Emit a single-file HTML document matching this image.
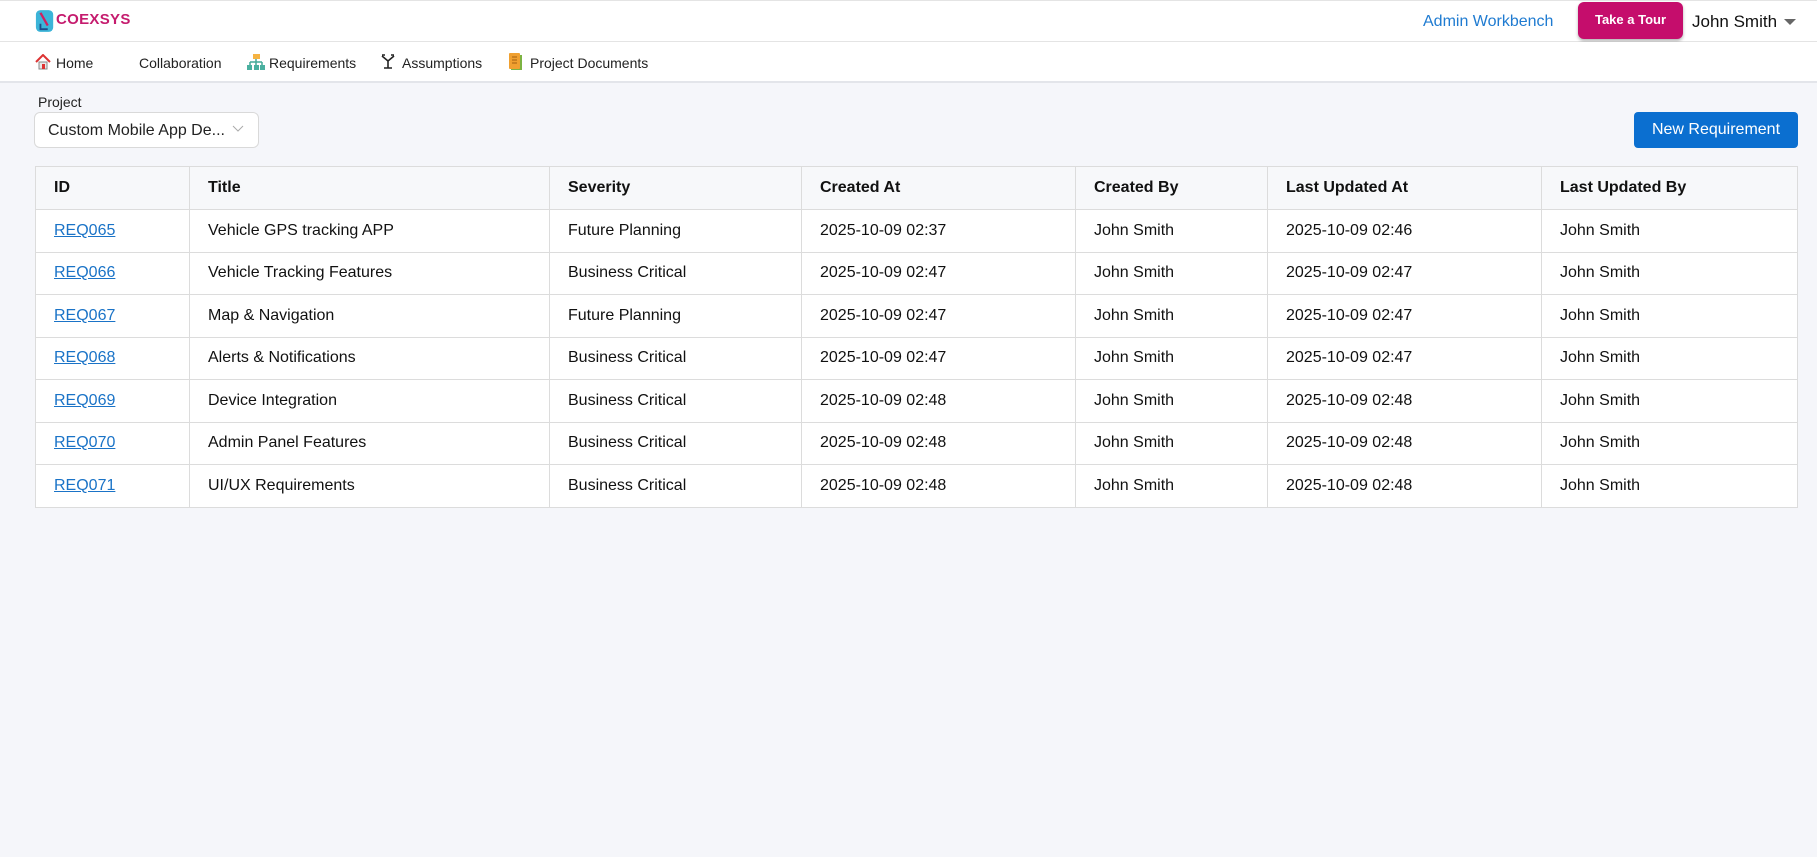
<!DOCTYPE html>
<html><head><meta charset="utf-8"><style>
*{box-sizing:border-box;margin:0;padding:0}
body{width:1817px;height:857px;background:#f5f6fa;font-family:"Liberation Sans",Arial,sans-serif;color:#111;position:relative;overflow:hidden}
.hdr{position:absolute;left:0;top:0;width:1817px;height:42px;background:#fff;border-top:1px solid #e4e4e4;border-bottom:1px solid #e4e4e4}
.nav{position:absolute;left:0;top:42px;width:1817px;height:41px;background:#fff;border-bottom:2px solid #e3e5ea}
.abs{position:absolute;white-space:nowrap}
.navt{font-size:14px;color:#222;top:13px}
table{position:absolute;left:35px;top:166px;width:1763px;border-collapse:collapse;background:#fff;font-size:16px}
td,th{border:1px solid #dcdcdc;height:42.5px;padding:0 0 0 18px;text-align:left;white-space:nowrap}
th{background:#f7f8fa;font-weight:bold;height:43px}
a{color:#1a73c7;text-decoration:underline}
</style></head><body>
<div class="hdr">
 <svg class="abs" style="left:35px;top:8px" width="20" height="24" viewBox="0 0 22 26"><rect x="1" y="1" width="19" height="24" rx="5" fill="#3bb4d8"/><path d="M6 4 L14 18" stroke="#d0205e" stroke-width="2.5"/><path d="M6 16 v6 h8" stroke="#1a4f8a" stroke-width="2" fill="none"/></svg>
 <div class="abs" style="left:56px;top:10px;font-size:15px;font-weight:bold;color:#c51b6e;letter-spacing:0.3px">COEXSYS</div>
 <div class="abs" style="left:1423px;top:12px;font-size:16px;color:#1f7bd1">Admin Workbench</div>
 <div class="abs" style="left:1578px;top:1px;width:105px;height:37px;background:#c50d6c;border-radius:6px;box-shadow:0 2px 3px rgba(0,0,0,.3);color:#fff;font-weight:bold;font-size:13px;text-align:center;line-height:36px">Take a Tour</div>
 <div class="abs" style="left:1692px;top:11px;font-size:17px;color:#111">John Smith</div>
 <div class="abs" style="left:1784px;top:18px;width:0;height:0;border-left:6px solid transparent;border-right:6px solid transparent;border-top:6px solid #666"></div>
</div>
<div class="nav">
 <svg class="abs" style="left:35px;top:12px" width="16" height="16" viewBox="0 0 16 16"><path d="M1 8 L8 1 L15 8" stroke="#d33" stroke-width="2" fill="none"/><rect x="4" y="8" width="8" height="7" fill="#e8e8e8" stroke="#888"/><rect x="7" y="10" width="3" height="5" fill="#d33"/></svg>
 <div class="abs navt" style="left:56px">Home</div>
 <div class="abs navt" style="left:139px">Collaboration</div>
 <svg class="abs" style="left:247px;top:12px" width="18" height="16" viewBox="0 0 18 16"><rect x="6" y="0" width="7" height="5" fill="#f5b342"/><path d="M9 5v3M3 8h12M3 8v3M9 8v3M15 8v3" stroke="#4a9" stroke-width="1.5"/><rect x="0" y="11" width="5" height="5" fill="#4ab0a0"/><rect x="7" y="11" width="5" height="5" fill="#4ab0a0"/><rect x="13" y="11" width="5" height="5" fill="#4ab0a0"/></svg>
 <div class="abs navt" style="left:269px">Requirements</div>
 <svg class="abs" style="left:380px;top:12px" width="16" height="16" viewBox="0 0 16 16"><path d="M2 2 L8 7 L14 2 M8 7 V14 M4 14 H12 M2 1h3M11 1h3" stroke="#222" stroke-width="1.6" fill="none"/></svg>
 <div class="abs navt" style="left:402px">Assumptions</div>
 <svg class="abs" style="left:508px;top:11px" width="15" height="18" viewBox="0 0 15 18"><rect x="3" y="2" width="11" height="15" fill="#7cb342"/><rect x="1" y="0" width="11" height="16" rx="1" fill="#f0a030"/><path d="M4 4h5M4 7h5M4 10h5" stroke="#a56010"/></svg>
 <div class="abs navt" style="left:530px">Project Documents</div>
</div>
<div class="abs" style="left:38px;top:94px;font-size:14px;color:#222">Project</div>
<div class="abs" style="left:34px;top:112px;width:225px;height:36px;background:#fff;border:1px solid #d9d9d9;border-radius:6px">
 <div class="abs" style="left:13px;top:9px;font-size:16px;color:#222">Custom Mobile App De...</div>
 <svg class="abs" style="left:197px;top:12px" width="12" height="8" viewBox="0 0 12 8"><path d="M1 1 L6 6 L11 1" stroke="#aaa" fill="none"/></svg>
</div>
<div class="abs" style="left:1634px;top:112px;width:164px;height:36px;background:#0b6fd0;border-radius:4px;color:#fff;font-size:16px;text-align:center;line-height:36px">New Requirement</div>
<table>
<colgroup><col style="width:154px"><col style="width:360px"><col style="width:252px"><col style="width:274px"><col style="width:192px"><col style="width:274px"><col></colgroup>
<tr><th>ID</th><th>Title</th><th>Severity</th><th>Created At</th><th>Created By</th><th>Last Updated At</th><th>Last Updated By</th></tr>
<tr><td><a>REQ065</a></td><td>Vehicle GPS tracking APP</td><td>Future Planning</td><td>2025-10-09 02:37</td><td>John Smith</td><td>2025-10-09 02:46</td><td>John Smith</td></tr>
<tr><td><a>REQ066</a></td><td>Vehicle Tracking Features</td><td>Business Critical</td><td>2025-10-09 02:47</td><td>John Smith</td><td>2025-10-09 02:47</td><td>John Smith</td></tr>
<tr><td><a>REQ067</a></td><td>Map &amp; Navigation</td><td>Future Planning</td><td>2025-10-09 02:47</td><td>John Smith</td><td>2025-10-09 02:47</td><td>John Smith</td></tr>
<tr><td><a>REQ068</a></td><td>Alerts &amp; Notifications</td><td>Business Critical</td><td>2025-10-09 02:47</td><td>John Smith</td><td>2025-10-09 02:47</td><td>John Smith</td></tr>
<tr><td><a>REQ069</a></td><td>Device Integration</td><td>Business Critical</td><td>2025-10-09 02:48</td><td>John Smith</td><td>2025-10-09 02:48</td><td>John Smith</td></tr>
<tr><td><a>REQ070</a></td><td>Admin Panel Features</td><td>Business Critical</td><td>2025-10-09 02:48</td><td>John Smith</td><td>2025-10-09 02:48</td><td>John Smith</td></tr>
<tr><td><a>REQ071</a></td><td>UI/UX Requirements</td><td>Business Critical</td><td>2025-10-09 02:48</td><td>John Smith</td><td>2025-10-09 02:48</td><td>John Smith</td></tr>
</table>
</body></html>
